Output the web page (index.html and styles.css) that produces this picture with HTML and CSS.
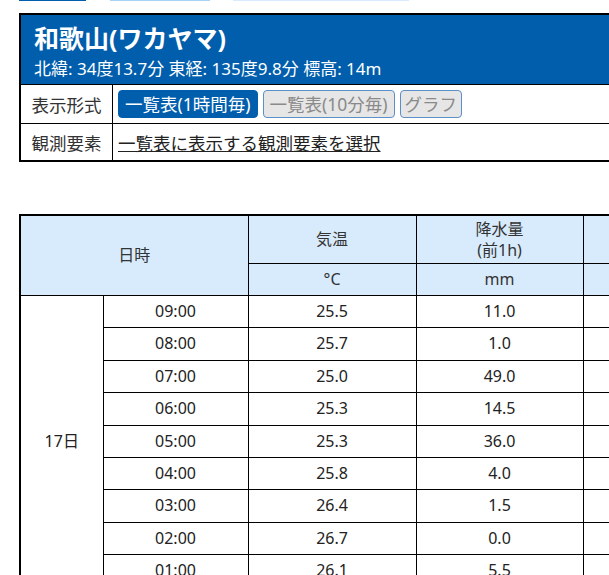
FILE: index.html
```html
<!DOCTYPE html>
<html lang="ja">
<head>
<meta charset="utf-8">
<title>和歌山(ワカヤマ)</title>
<link rel="stylesheet" href="styles.css">
</head>
<body>
<div class="page">
  <div class="tabs">
    <span class="tab tab-a"></span>
    <span class="tab tab-b"></span>
    <span class="tab tab-c"></span>
  </div>
  <div class="station">
    <div class="station-head">
      <h1 class="station-name">和歌山(ワカヤマ)</h1>
      <p class="station-loc">北緯: 34度13.7分 東経: 135度9.8分 標高: 14m</p>
    </div>
    <div class="opt-row opt-row-first">
      <div class="opt-label">表示形式</div>
      <div class="opt-body">
        <span class="btn btn-on">一覧表(1時間毎)</span>
        <span class="btn btn-off">一覧表(10分毎)</span>
        <span class="btn btn-off btn-narrow">グラフ</span>
      </div>
    </div>
    <div class="opt-row opt-row-second">
      <div class="opt-label">観測要素</div>
      <div class="opt-body">
        <a class="opt-link" href="#">一覧表に表示する観測要素を選択</a>
      </div>
    </div>
  </div>

  <table class="data">
    <colgroup>
      <col class="c-day">
      <col class="c-time">
      <col class="c-temp">
      <col class="c-prec">
      <col class="c-more">
    </colgroup>
    <thead>
      <tr class="h1">
        <th colspan="2" rowspan="2">日時</th>
        <th>気温</th>
        <th>降水量<br>(前1h)</th>
        <th></th>
      </tr>
      <tr class="h2">
        <th>°C</th>
        <th>mm</th>
        <th></th>
      </tr>
    </thead>
    <tbody>
      <tr><td rowspan="9">17日</td><td>09:00</td><td>25.5</td><td>11.0</td><td></td></tr>
      <tr><td>08:00</td><td>25.7</td><td>1.0</td><td></td></tr>
      <tr><td>07:00</td><td>25.0</td><td>49.0</td><td></td></tr>
      <tr><td>06:00</td><td>25.3</td><td>14.5</td><td></td></tr>
      <tr><td>05:00</td><td>25.3</td><td>36.0</td><td></td></tr>
      <tr><td>04:00</td><td>25.8</td><td>4.0</td><td></td></tr>
      <tr><td>03:00</td><td>26.4</td><td>1.5</td><td></td></tr>
      <tr><td>02:00</td><td>26.7</td><td>0.0</td><td></td></tr>
      <tr><td>01:00</td><td>26.1</td><td>5.5</td><td></td></tr>
    </tbody>
  </table>
</div>
</body>
</html>
```
FILE: styles.css
```css
html, body {
  margin: 0;
  padding: 0;
}
body {
  font-family: "Noto Sans", "Noto Sans CJK JP", sans-serif;
  color: #222;
  background: #fff;
  overflow: hidden;
}
.page {
  padding-left: 19px;
  width: 1000px;
}
.tabs {
  display: flex;
  height: 1px;
}
.tab {
  display: block;
  height: 1px;
}
.tab-a {
  width: 67px;
  background: #005eac;
}
.tab-b {
  width: 100px;
  margin-left: 24px;
  background: #a7d3f7;
}
.tab-c {
  width: 176px;
  margin-left: 23px;
  background: #d9ecff;
}
.station {
  margin-top: 12px;
  border: 2px solid #000;
  width: 900px;
}
.station-head {
  background: #005eac;
  color: #fff;
  padding: 7px 13px 0;
  border-bottom: 1px solid #000;
}
.station-name {
  margin: 0;
  font-size: 25px;
  line-height: 32px;
  font-weight: bold;
}
.station-loc {
  margin: 0;
  font-size: 17px;
  line-height: 30px;
}
.opt-row {
  display: flex;
}
.opt-row-first {
  height: 38px;
  border-bottom: 1px solid #000;
}
.opt-row-second {
  height: 36px;
}
.opt-label {
  width: 91px;
  border-right: 1px solid #000;
  display: flex;
  align-items: center;
  justify-content: center;
  font-size: 17.5px;
  color: #333;
}
.opt-body {
  display: flex;
  align-items: center;
  gap: 5px;
  padding-left: 5px;
  font-size: 17.5px;
}
.btn {
  box-sizing: border-box;
  height: 28px;
  padding: 0 6px;
  border-radius: 4px;
  border: 1px solid;
  line-height: 26px;
}
.btn-narrow {
  padding: 0 4px;
}
.btn-on {
  background: #005eac;
  border-color: #005eac;
  color: #fff;
}
.btn-off {
  background: #e6e6e6;
  border-color: #5b8fc9;
  color: #8a8a8a;
}
.opt-link {
  color: #222;
  text-decoration: underline;
}
.data {
  margin-top: 52px;
  border-collapse: collapse;
  border: 2px solid #000;
  table-layout: fixed;
  width: 732px;
  font-size: 16px;
  color: #222;
}
.c-day { width: 83px; }
.c-time { width: 145px; }
.c-temp { width: 168px; }
.c-prec { width: 167px; }
.c-more { width: 167px; }
.data th {
  background: #d8ebfd;
  font-weight: normal;
  color: #333;
  border: 1px solid #000;
  padding: 2.5px 4px;
  line-height: 21px;
}
.data .h2 th {
  padding: 5px 4px;
}
.data td {
  border: 1px solid #000;
  padding: 4px;
  line-height: 23.375px;
  text-align: center;
}
```
